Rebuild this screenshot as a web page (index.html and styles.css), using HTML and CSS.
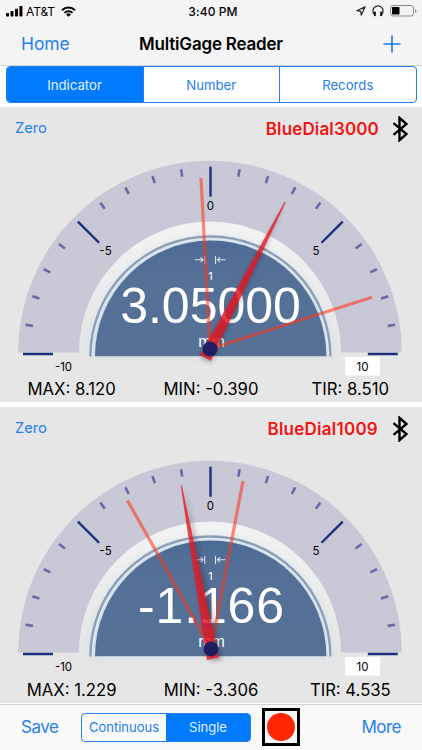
FILE: index.html
```html
<!DOCTYPE html>
<html lang="en">
<head>
<meta charset="utf-8">
<title>MultiGage Reader</title>
<link rel="stylesheet" href="styles.css">
</head>
<body>
<svg class="defs" width="0" height="0" aria-hidden="true">
  <defs>
    <linearGradient id="face" x1="0" y1="0" x2="0" y2="1">
      <stop offset="0" stop-color="#f3f3f3"/><stop offset="1" stop-color="#e6e6e6"/>
    </linearGradient>
    <linearGradient id="screen" x1="0" y1="0" x2="0" y2="1">
      <stop offset="0" stop-color="#4b6b96"/><stop offset=".3" stop-color="#557097"/><stop offset="1" stop-color="#567196"/>
    </linearGradient>
    <filter id="glow" x="-20%" y="-20%" width="140%" height="140%"><feGaussianBlur stdDeviation="5"/></filter>
    <filter id="shade" x="-50%" y="-20%" width="200%" height="140%"><feGaussianBlur stdDeviation="2"/></filter>
    <g id="minor">
      <path d="M23.2 247h7.5" transform="rotate(9 210.3 247)"/>
      <path d="M23.2 247h7.5" transform="rotate(18 210.3 247)"/>
      <path d="M23.2 247h7.5" transform="rotate(27 210.3 247)"/>
      <path d="M23.2 247h7.5" transform="rotate(36 210.3 247)"/>
      <path d="M23.2 247h7.5" transform="rotate(54 210.3 247)"/>
      <path d="M23.2 247h7.5" transform="rotate(63 210.3 247)"/>
      <path d="M23.2 247h7.5" transform="rotate(72 210.3 247)"/>
      <path d="M23.2 247h7.5" transform="rotate(81 210.3 247)"/>
    </g>
    <g id="scale">
      <path d="M18.3 245.5a191.7 191.7 0 0 1 383.4 0z" fill="#c9c8d7"/>
      <path d="M79 245.5a131 131 0 0 1 262 0v1H79z" fill="url(#face)"/>
      <path d="M88 251a122 122 0 0 1 244 0z" fill="#c6d8e6" opacity=".45" filter="url(#glow)"/>
      <path d="M91 249.5a119.5 119.5 0 0 1 239 0z" fill="#e2e9ef"/>
      <path d="M90.4 249.5a120 120 0 0 1 240 0" fill="none" stroke="#8ba0b7" stroke-width="2.4"/>
      <path d="M94 249.5a116.4 116.4 0 0 1 232.8 0" fill="none" stroke="#d0e0ed" stroke-width="2"/>
      <path d="M95 249.3a115.4 115.4 0 0 1 231.4 0z" fill="url(#screen)"/>
      <g stroke="#686aa5" stroke-width="2.6">
        <use href="#minor"/><use href="#minor" transform="translate(420.6 0) scale(-1 1)"/>
      </g>
      <g stroke="#1d2f7c" stroke-width="2.4">
        <path d="M23 247h30M367.8 247h30"/>
        <path d="M23 247h30" transform="rotate(45 210.3 247)"/>
        <path d="M23 247h30" transform="rotate(135 210.3 247)"/>
        <path d="M210.5 59.7v30"/>
      </g>
      <g stroke="#dbe3ed" stroke-width="1.1" fill="none">
        <path d="M195 152.800h8M200.500 150.500l2.700 2.300-2.700 2.300M204.700 149v8M215.500 149v8M225.500 152.800h-8M220 150.500l-2.700 2.300 2.700 2.300"/>
      </g>
      <rect x="345" y="250" width="35" height="18.500" fill="#fff"/>
    </g>
    <g id="bluetooth">
      <path d="M1.500 7.200l13 10.800-7 6.200V1.800l7 6.200-13 10.800" fill="none" stroke="#000" stroke-width="2.400"/>
    </g>
  </defs>
</svg>

<header class="top">
  <div class="status">
    <div class="carrier">
      <svg width="17" height="11" viewBox="0 0 17 11"><rect x="0" y="7" width="3" height="3.500" rx=".7"/><rect x="4.500" y="5" width="3" height="5.500" rx=".7"/><rect x="9" y="2.700" width="3" height="7.800" rx=".7"/><rect x="13.400" y="0" width="3" height="10.500" rx=".7"/></svg>
      <span class="carrier-name">AT&amp;T</span>
      <svg class="wifi" width="15" height="11" viewBox="0 0 15 11"><g fill="none" stroke="#000" stroke-width="2"><path d="M1 4.300a9.200 9.200 0 0 1 13 0M3.500 6.900a5.700 5.700 0 0 1 8 0"/></g><path d="M7.500 10.800L5.100 8.500a3.500 3.500 0 0 1 4.800 0z"/></svg>
    </div>
    <time class="clock">3:40 PM</time>
    <div class="indicators">
      <svg width="10" height="10" viewBox="0 0 10 10"><path d="M9 .9L.9 4.700l3.800.6.600 3.800z" fill="none" stroke="#222" stroke-width="1.200" stroke-linejoin="round"/></svg>
      <svg width="12" height="12" viewBox="0 0 12 12"><path d="M2 9.500C-1 4 3 .8 6 .8S13 4 10 9.500" fill="none" stroke="#222" stroke-width="1.200"/><rect x="2" y="6.500" width="1.800" height="4.800" rx=".8"/><rect x="8.200" y="6.500" width="1.800" height="4.800" rx=".8"/></svg>
      <svg width="27" height="12" viewBox="0 0 27 12"><rect x=".5" y=".5" width="23" height="10.500" rx="2.500" fill="none" stroke="#8b8b8b"/><rect x="2" y="2" width="7.500" height="7.500" rx=".8"/><path d="M25 4v4q1.500-.6 1.500-2T25 4" fill="#8b8b8b"/></svg>
    </div>
  </div>
  <nav class="nav">
    <a class="home">Home</a>
    <h1 class="title">MultiGage Reader</h1>
    <a class="add"><svg width="18" height="18" viewBox="0 0 18 18"><path d="M9 .5v17M.5 9h17" stroke="#177cf5" stroke-width="1.600"/></svg></a>
  </nav>
</header>

<div class="tabs">
  <div class="tab active">Indicator</div>
  <div class="tab">Number</div>
  <div class="tab">Records</div>
</div>

<main class="gauges">
  <section class="gauge">
    <svg class="dial" width="422" height="295" viewBox="0 0 422 295">
      <use href="#scale"/>
      <g class="labels">
        <text x="210.500" y="103">0</text><text x="105.500" y="147.500">-5</text><text x="316" y="147.500">5</text>
        <text x="63.500" y="263.500">-10</text><text x="362.500" y="263.500">10</text>
        <text class="lit" x="210.500" y="173">1</text>
      </g>
      <text class="unit" x="211.500" y="240">mm</text>
      <text class="value" x="210.500" y="215.700">3.05000</text>
      <g stroke="#ff3418" stroke-opacity=".56" stroke-width="3.200"><path d="M210 242L201 71"/><path d="M210 242l162-51.800"/></g>
      <g transform="translate(210 242) rotate(27.100)">
        <path d="M0-165L-6 10H6z" fill="#222" opacity=".35" filter="url(#shade)" transform="translate(1 2)"/>
        <path d="M-.6-165L-6 10H6L.6-165z" fill="#eb1521" fill-opacity=".78"/>
      </g>
      <circle cx="210" cy="242" r="7.500" fill="#201d60"/>
    </svg>
    <div class="gauge-head">
      <a class="zero">Zero</a>
      <span class="device">BlueDial3000</span>
      <svg class="bt" width="16" height="26" viewBox="0 0 16 26"><use href="#bluetooth"/></svg>
    </div>
    <div class="stats"><span>MAX: 8.120</span><span>MIN: -0.390</span><span>TIR: 8.510</span></div>
  </section>

  <section class="gauge">
    <svg class="dial" width="422" height="295" viewBox="0 0 422 295">
      <use href="#scale"/>
      <g class="labels">
        <text x="210.500" y="103">0</text><text x="105.500" y="147.500">-5</text><text x="316" y="147.500">5</text>
        <text x="63.500" y="263.500">-10</text><text x="362.500" y="263.500">10</text>
        <text class="lit" x="210.500" y="173">1</text>
      </g>
      <text class="unit" x="211.500" y="240">mm</text>
      <text class="value" x="138" y="215.700" textLength="146" style="text-anchor:start">-1.166</text>
      <g stroke="#ff3418" stroke-opacity=".56" stroke-width="3.200"><path d="M211 242L127.500 93.500"/><path d="M211 242l32-168"/></g>
      <g transform="translate(211 242) rotate(-10.300)">
        <path d="M0-166L-6 10H6z" fill="#222" opacity=".35" filter="url(#shade)" transform="translate(3 2)"/>
        <path d="M-.6-166L-6 10H6L.6-166z" fill="#eb1521" fill-opacity=".78"/>
      </g>
      <circle cx="211" cy="242" r="7.500" fill="#201d60"/>
    </svg>
    <div class="gauge-head">
      <a class="zero">Zero</a>
      <span class="device narrow">BlueDial1009</span>
      <svg class="bt" width="16" height="26" viewBox="0 0 16 26"><use href="#bluetooth"/></svg>
    </div>
    <div class="stats"><span>MAX: 1.229</span><span>MIN: -3.306</span><span>TIR: 4.535</span></div>
  </section>
</main>

<footer class="toolbar">
  <a class="save">Save</a>
  <div class="mode"><span>Continuous</span><span class="active">Single</span></div>
  <div class="record"><i></i></div>
  <a class="more">More</a>
</footer>
</body>
</html>
```

FILE: styles.css
```css
* { box-sizing: border-box; }
body {
  margin: 0;
  width: 422px;
  height: 750px;
  overflow: hidden;
  background: #fff;
  color: #000;
  font-family: Inter, "Liberation Sans", sans-serif;
  display: flex;
  flex-direction: column;
}
svg { display: block; flex: none; }
.defs { position: absolute; }

.top { height: 66px; background: #f4f4f4; border-bottom: 1px solid #d2d2d2; }
.status {
  height: 22px;
  padding: 0 5px 0 6px;
  display: grid;
  grid-template-columns: 1fr auto 1fr;
  align-items: center;
  font-size: 12px;
}
.carrier { display: flex; align-items: center; }
.carrier-name { margin-left: 3px; letter-spacing: -.1px; }
.wifi { margin-left: 6px; }
.clock { font-weight: 500; letter-spacing: .1px; padding-left: 3px; }
.indicators { display: flex; align-items: center; justify-content: flex-end; gap: 6px; }
.nav {
  height: 43px;
  padding: 0 21px;
  display: grid;
  grid-template-columns: 1fr auto 1fr;
  align-items: center;
}
.home, .save, .more { color: #2480ee; font-size: 17.5px; letter-spacing: -.1px; }
.save, .more { font-size: 17px; letter-spacing: -.5px; }
.title { margin: 0; font-size: 17px; font-weight: 600; letter-spacing: -.2px; }
.add { justify-self: end; }

.tabs {
  height: 37px;
  margin: 0 5.500px 4px;
  border: 1px solid #2480ee;
  border-radius: 4px;
  display: grid;
  grid-template-columns: 136px 1fr 1fr;
  overflow: hidden;
  flex: none;
}
.tab {
  display: flex;
  align-items: center;
  justify-content: center;
  color: #2480ee;
  font-size: 13.200px;
}
.tab + .tab { border-left: 1px solid #2480ee; }
.tab.active { background: #007aff; color: #e5f1ff; }

.gauges { display: flex; flex-direction: column; gap: 5px; }
.gauge {
  height: 295.300px;
  background: #e6e6e6;
  position: relative;
  display: flex;
  flex-direction: column;
  justify-content: space-between;
}
.dial { position: absolute; inset: 0; }
.gauge-head, .stats { position: relative; }
.gauge-head { display: flex; align-items: flex-start; padding: 9px 14px 0 15px; }
.zero { flex: 1; color: #2480ee; font-size: 14.700px; line-height: 24px; }
.device { color: #f01414; font-size: 17px; font-weight: 600; line-height: 26px; letter-spacing: .15px; margin-right: 13px; }
.device.narrow { letter-spacing: .25px; margin-right: 14px; }
.stats {
  display: grid;
  grid-template-columns: repeat(3, 1fr);
  padding: 0 2px 2px;
  text-align: center;
  font-size: 16.700px;
  line-height: 22px;
}

.labels { font-size: 11.500px; text-anchor: middle; }
.lit, .unit, .value { fill: #fff; text-anchor: middle; }
.lit { font-size: 11px; }
.unit { font-size: 16px; font-family: "Liberation Sans", sans-serif; }
.value { font-size: 50px; font-family: "Liberation Sans", sans-serif; }

.toolbar {
  margin-top: 1px;
  flex: 1;
  background: #f9f9fa;
  border-top: 1px solid #d0d0d0;
  padding: 0 21px;
  display: grid;
  grid-template-columns: 60px 170px 38px 1fr;
  align-items: center;
}
.mode {
  height: 29px;
  border: 1px solid #2480ee;
  border-radius: 4px;
  overflow: hidden;
  display: grid;
  grid-template-columns: 1fr 1fr;
  color: #2480ee;
  font-size: 13px;
  line-height: 27px;
  text-align: center;
}
.mode .active { background: #007aff; color: #e5f1ff; }
.record {
  width: 38px;
  height: 38px;
  margin-left: 11px;
  border: 3px solid #000;
  display: grid;
  place-items: center;
}
.record i { width: 28px; height: 28px; border-radius: 50%; background: #ff2600; }
.more { justify-self: end; }
```
